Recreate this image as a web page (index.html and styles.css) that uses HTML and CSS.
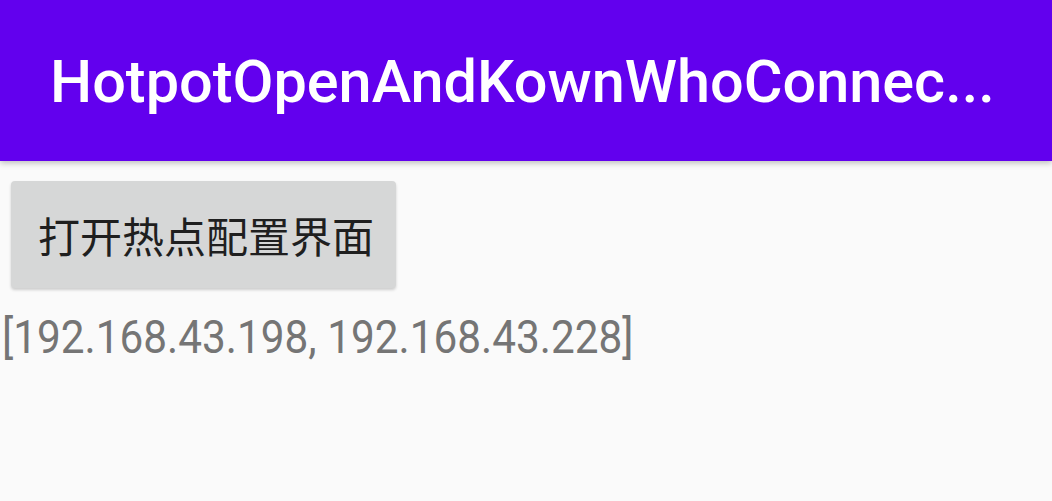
FILE: index.html
```html
<!DOCTYPE html>
<html>
<head>
<meta charset="utf-8">
<link rel="stylesheet" href="styles.css">
</head>
<body>
<header class="appbar">
  <span class="title">HotpotOpenAndKownWhoConnec...</span>
</header>
<main class="content">
  <button class="btn"><span class="btn-label">打开热点配置界面</span></button>
  <p class="ips"><span class="ips-text">[192.168.43.198, 192.168.43.228]</span></p>
</main>
</body>
</html>
```

FILE: styles.css
```css
html, body {
  margin: 0;
  padding: 0;
  background: #fafafa;
  width: 1052px;
  height: 501px;
  overflow: hidden;
}
.appbar {
  height: 161px;
  background: #6200ee;
  display: flex;
  align-items: center;
  padding-left: 50px;
  box-shadow: 0 2px 6px rgba(0,0,0,0.25);
  position: relative;
  z-index: 1;
}
.title {
  color: #ffffff;
  font-family: Roboto, "Noto Sans", sans-serif;
  font-weight: 500;
  font-size: 60px;
  display: inline-block;
  transform: scaleX(0.99);
  transform-origin: left center;
  white-space: nowrap;
  margin-top: 2px;
}
.content {
  display: flex;
  flex-direction: column;
  align-items: flex-start;
  padding-top: 20px;
}
.btn {
  margin-left: 11px;
  width: 385px;
  height: 107px;
  background: #d6d7d7;
  border: none;
  border-radius: 4px;
  box-shadow: 0 2px 3px rgba(0,0,0,0.18);
  display: flex;
  align-items: center;
  padding: 0 0 0 27px;
}
.btn-label {
  font-family: "Noto Sans CJK SC", sans-serif;
  font-size: 42px;
  color: #1f1f1f;
  display: inline-block;
  white-space: nowrap;
}
.ips {
  margin: 22px 0 0 0;
  padding-left: 2px;
}
.ips-text {
  font-family: Roboto, sans-serif;
  font-size: 46px;
  color: #757575;
  display: inline-block;
  transform: scaleX(0.92);
  transform-origin: left center;
  white-space: nowrap;
}
```
